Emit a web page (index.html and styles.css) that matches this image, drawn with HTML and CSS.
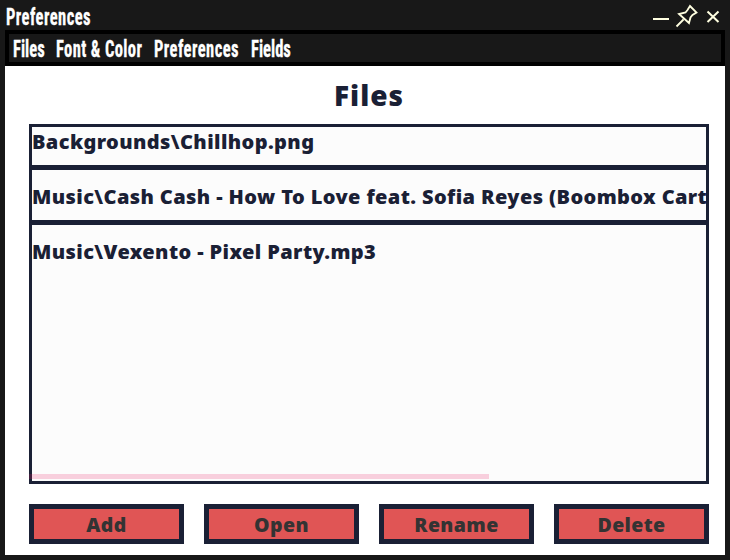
FILE: index.html
```html
<!DOCTYPE html>
<html lang="en">
<head>
<meta charset="utf-8">
<title>Preferences</title>
<link rel="stylesheet" href="styles.css">
</head>
<body>
<div class="window">
  <header class="titlebar">
    <h1 class="title">Preferences</h1>
    <svg class="controls" viewBox="0 0 80 30" fill="none" stroke="#ffffe1" stroke-width="1.8">
      <path d="M8 19H24" stroke-width="2"/>
      <path d="M31.500 26.500L38.500 19.500M45 6L51.500 12.500L47.500 15L45.500 17.500L44 23L34 14L40.500 12.500L42.500 10Z"/>
      <path d="M62.500 11.500L73.500 22M73.500 11.500L62.500 22" stroke-width="2"/>
    </svg>
  </header>
  <nav class="menu">
    <span class="item files">Files</span>
    <span class="item font">Font &amp; Color</span>
    <span class="item prefs">Preferences</span>
    <span class="item fields">Fields</span>
  </nav>
  <main class="panel">
    <h2 class="heading">Files</h2>
    <div class="list">
      <div class="row first">Backgrounds\Chillhop.png</div>
      <div class="row">Music\Cash Cash - How To Love feat. Sofia Reyes (Boombox Cart</div>
      <div class="row">Music\Vexento - Pixel Party.mp3</div>
      <div class="scrollbar"></div>
    </div>
    <div class="actions">
      <button>Add</button>
      <button>Open</button>
      <button>Rename</button>
      <button>Delete</button>
    </div>
  </main>
</div>
</body>
</html>
```
FILE: styles.css
```css
* { box-sizing: border-box; }
body { margin: 0; }
.window {
  width: 730px;
  height: 560px;
  padding: 0 5px 5px;
  background: #181818;
  overflow: hidden;
}
.titlebar {
  display: flex;
  justify-content: space-between;
  height: 30px;
}
.title, .item {
  font: bold 23px/36px "Liberation Sans Narrow", "Roboto Condensed", "Roboto", sans-serif;
  color: #fff;
  white-space: nowrap;
  transform-origin: 0 50%;
  transform: scaleX(.72);
  -webkit-text-stroke: .3px #fff;
}
.title { margin: 0 0 0 1px; letter-spacing: .6px; }
.controls { width: 80px; height: 30px; }
.menu {
  display: flex;
  height: 36px;
  padding-left: 4px;
  border: 4px solid #000;
}
.item { line-height: 32px; }
.files { width: 43px; }
.font { width: 98px; letter-spacing: .5px; }
.prefs { width: 97px; letter-spacing: .6px; }
.panel {
  height: 489px;
  padding: 0 16px 0 24px;
  background: #fff;
  color: #1a2035;
  font-family: "Noto Sans", "Open Sans", sans-serif;
  font-weight: 900;
}
.heading {
  width: 680px;
  height: 58px;
  margin: 0;
  font-size: 28px;
  font-weight: 900;
  line-height: 58px;
  letter-spacing: 1px;
  text-align: center;
}
.list {
  position: relative;
  width: 680px;
  height: 360px;
  border: 3px solid #1a2035;
  background: #fcfcfc;
}
.row {
  height: 55px;
  border-bottom: 5px solid #1a2035;
  font-size: 20px;
  line-height: 54px;
  letter-spacing: .39px;
  white-space: nowrap;
  overflow: hidden;
}
.row.first { height: 43px; line-height: 30px; }
.row:nth-child(3) { border-bottom: 0; }
.scrollbar {
  position: absolute;
  left: -3px;
  bottom: 2px;
  width: 460px;
  height: 5px;
  background: rgba(233, 30, 99, .2);
}
.actions {
  display: flex;
  gap: 20px;
  width: 680px;
  margin-top: 20px;
}
button {
  width: 155px;
  height: 40px;
  padding: 2px 0 0;
  border: 5px solid #1a2035;
  background: #e05555;
  color: #333;
  font: 900 19.5px/28px "Noto Sans", "Open Sans", sans-serif;
  letter-spacing: .4px;
}
```
